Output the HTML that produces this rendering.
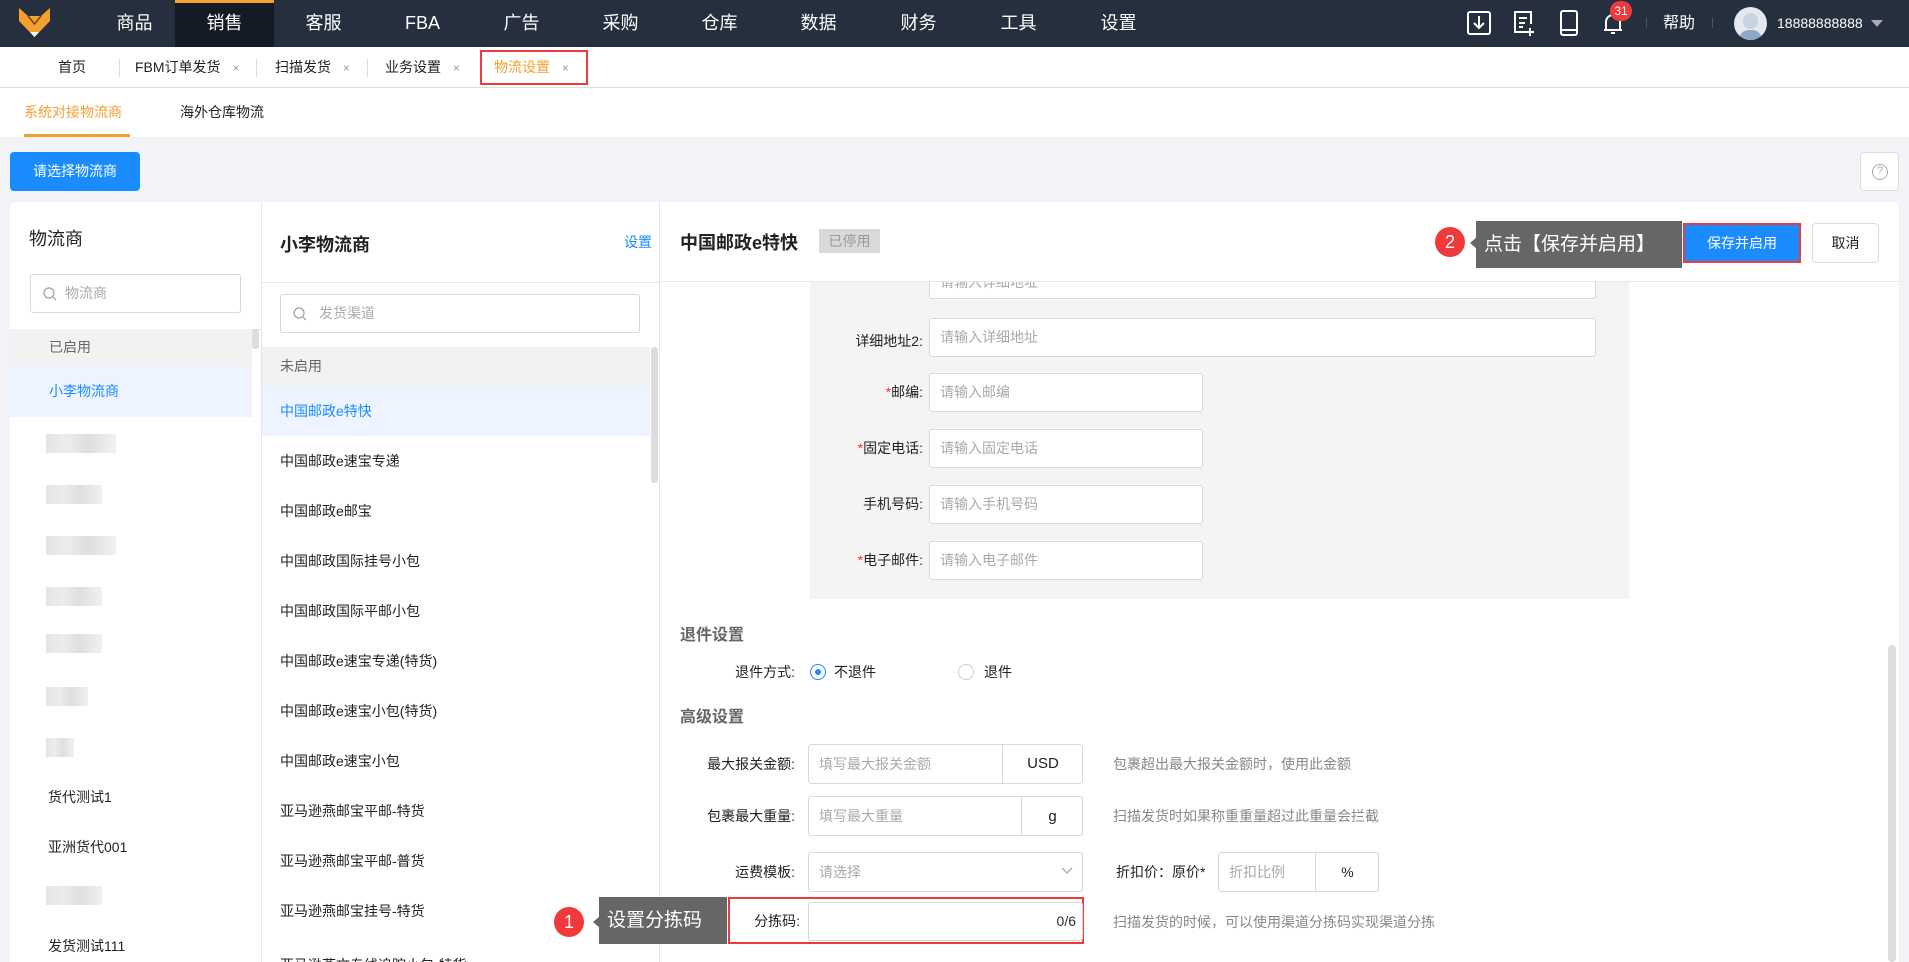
<!DOCTYPE html>
<html><head><meta charset="utf-8">
<style>
*{margin:0;padding:0;box-sizing:border-box}
body{width:1909px;height:962px;overflow:hidden;background:#f2f3f7;font-family:"Liberation Sans","Noto Sans CJK SC",sans-serif;font-size:14px;color:#222;position:relative}
.a{position:absolute}
.nav{left:0;top:0;width:1909px;height:47px;background:#252f3e}
.ni{top:0;height:47px;width:99px;line-height:47px;text-align:center;color:#fff;font-size:18px}
.tabs{left:0;top:47px;width:1909px;height:41px;background:#fff;border-bottom:1px solid #ddd}
.tb{top:0;height:41px;line-height:41px;font-size:14px;color:#222}
.x{color:#999;font-size:12px}
.sep{top:12px;width:1px;height:18px;background:#ddd}
.sub{left:0;top:88px;width:1909px;height:49px;background:#fff}
.inp{background:#fff;border:1px solid #d9d9d9;border-radius:3px;color:#aaa;font-size:14px;padding-left:10px}
.li{left:0;width:100%;height:50px;line-height:50px;font-size:14px}
.lbl{text-align:right;font-size:14px;color:#222}
.blur{height:19px;background:linear-gradient(90deg,#ddd,#e8e8e8 30%,#d6d6d6 60%,#eee);opacity:.8}
.hint{color:#888;font-size:14px}
</style></head><body>
<div class="a nav">
 <svg class="a" style="left:18px;top:7px" width="33" height="31" viewBox="0 0 33 31"><path d="M1 1 L10 9 H23 L32 1 V14 L16.5 30 L1 14Z" fill="#f6a030"/><path d="M10 9 L16.5 17 L23 9" fill="none" stroke="#6b4a1a" stroke-width="1.5"/><path d="M12 25 L16.5 30 L21 25Z" fill="#fff"/></svg>
 <div class="a ni" style="left:85px">商品</div>
 <div class="a ni" style="left:175px;background:#141a26;border-top:3px solid #f6a030;line-height:41px">销售</div>
 <div class="a ni" style="left:274px">客服</div>
 <div class="a ni" style="left:373px">FBA</div>
 <div class="a ni" style="left:472px">广告</div>
 <div class="a ni" style="left:571px">采购</div>
 <div class="a ni" style="left:670px">仓库</div>
 <div class="a ni" style="left:769px">数据</div>
 <div class="a ni" style="left:869px">财务</div>
 <div class="a ni" style="left:969px">工具</div>
 <div class="a ni" style="left:1069px">设置</div>
 <svg class="a" style="left:1467px;top:11px" width="24" height="24" viewBox="0 0 24 24" fill="none" stroke="#fff" stroke-width="2"><rect x="1" y="1" width="22" height="22" rx="2"/><path d="M12 5v12M7 12l5 5 5-5"/></svg>
 <svg class="a" style="left:1513px;top:11px" width="24" height="26" viewBox="0 0 24 26" fill="none" stroke="#fff" stroke-width="2"><path d="M15 21H2V1h16v12M6 7h8M6 12h6M6 16h4M17 17v8M13 21h8"/></svg>
 <svg class="a" style="left:1560px;top:10px" width="18" height="26" viewBox="0 0 18 26" fill="none" stroke="#fff" stroke-width="2"><rect x="1" y="1" width="16" height="24" rx="2"/><path d="M1 20h16"/></svg>
 <svg class="a" style="left:1602px;top:12px" width="22" height="24" viewBox="0 0 22 24" fill="none" stroke="#fff" stroke-width="2"><path d="M4 18V10a7 7 0 0 1 14 0v8H2h18M9 21h4"/></svg>
 <div class="a" style="left:1610px;top:1px;width:22px;height:20px;border-radius:10px;background:#f0393b;color:#fff;font-size:12px;text-align:center;line-height:20px">31</div>
 <div class="a" style="left:1646px;top:18px;width:1px;height:10px;background:#555"></div>
 <div class="a" style="left:1663px;top:0;line-height:47px;color:#fff;font-size:16px">帮助</div>
 <div class="a" style="left:1712px;top:18px;width:1px;height:10px;background:#555"></div>
 <div class="a" style="left:1734px;top:7px;width:33px;height:33px;border-radius:50%;background:#e5e8ee;overflow:hidden"><div class="a" style="left:9px;top:6px;width:15px;height:16px;border-radius:50%;background:#c8d2e0"></div><div class="a" style="left:5px;top:23px;width:23px;height:14px;border-radius:10px 10px 0 0;background:#8ea6c8"></div></div>
 <div class="a" style="left:1777px;top:0;line-height:47px;color:#fff;font-size:14px">18888888888</div>
 <div class="a" style="left:1871px;top:20px;width:0;height:0;border-left:6px solid transparent;border-right:6px solid transparent;border-top:7px solid #aaa"></div>
</div>

<div class="a tabs">
 <div class="a tb" style="left:58px">首页</div>
 <div class="a sep" style="left:119px"></div>
 <div class="a tb" style="left:135px">FBM订单发货 <span class="x" style="margin-left:8px">×</span></div>
 <div class="a sep" style="left:256px"></div>
 <div class="a tb" style="left:275px">扫描发货 <span class="x" style="margin-left:8px">×</span></div>
 <div class="a sep" style="left:367px"></div>
 <div class="a tb" style="left:385px">业务设置 <span class="x" style="margin-left:8px">×</span></div>
 <div class="a" style="left:480px;top:3px;width:108px;height:35px;border:2px solid #f0393b"></div>
 <div class="a tb" style="left:494px;color:#f6a030">物流设置 <span class="x" style="margin-left:8px">×</span></div>
</div>

<div class="a sub">
 <div class="a" style="left:24px;top:0;line-height:48px;color:#f6a030;font-size:14px">系统对接物流商</div>
 <div class="a" style="left:24px;top:46px;width:106px;height:3px;background:#f6a030"></div>
 <div class="a" style="left:180px;top:0;line-height:48px;font-size:14px">海外仓库物流</div>
</div>

<div class="a" style="left:10px;top:152px;width:130px;height:39px;background:#1a8cff;border-radius:4px;color:#fff;text-align:center;line-height:39px;font-size:14px">请选择物流商</div>
<div class="a" style="left:1860px;top:152px;width:39px;height:39px;background:#fff;border:1px solid #ddd;border-radius:4px"><div class="a" style="left:11px;top:11px;width:16px;height:16px;border:1.5px solid #aaa;border-radius:50%;color:#aaa;font-size:11px;text-align:center;line-height:13px">?</div></div>

<div class="a" style="left:10px;top:202px;width:1889px;height:760px;background:#fff;border-radius:6px 6px 0 0;overflow:hidden">
 <div class="a" style="left:0;top:0;width:252px;height:760px;border-right:1px solid #e5e5e5">
  <div class="a" style="left:19px;top:23px;font-size:18px">物流商</div>
  <div class="a inp" style="left:20px;top:72px;width:211px;height:39px;line-height:37px;padding-left:34px">物流商</div>
  <svg class="a" style="left:33px;top:85px" width="14" height="14" viewBox="0 0 14 14" fill="none" stroke="#aaa" stroke-width="1.4"><circle cx="6" cy="6" r="5"/><path d="M10 10l3 3"/></svg>
  <div class="a" style="left:0;top:127px;width:252px;height:1px;background:#e8e8e8"></div>
  <div class="a" style="left:0;top:127px;width:242px;height:37px;background:#f2f2f2;color:#666;line-height:37px;padding-left:39px">已启用</div>
  <div class="a" style="left:0;top:164px;width:242px;height:51px;background:#eef4ff;color:#1a8cff;line-height:51px;padding-left:39px">小李物流商</div>
  <div class="a" style="left:242px;top:127px;width:7px;height:20px;background:#ddd;border-radius:3px"></div>
  <div class="a blur" style="left:36px;top:232px;width:70px"></div>
  <div class="a blur" style="left:36px;top:283px;width:56px"></div>
  <div class="a blur" style="left:36px;top:334px;width:70px"></div>
  <div class="a blur" style="left:36px;top:385px;width:56px"></div>
  <div class="a blur" style="left:36px;top:432px;width:56px"></div>
  <div class="a blur" style="left:36px;top:485px;width:42px"></div>
  <div class="a blur" style="left:36px;top:536px;width:28px"></div>
  <div class="a" style="left:38px;top:570px;line-height:50px">货代测试1</div>
  <div class="a" style="left:38px;top:620px;line-height:50px">亚洲货代001</div>
  <div class="a blur" style="left:36px;top:684px;width:56px"></div>
  <div class="a" style="left:38px;top:719px;line-height:50px">发货测试111</div>
 </div>
 <div class="a" style="left:252px;top:0;width:398px;height:760px;border-right:1px solid #e5e5e5">
  <div class="a" style="left:18px;top:29px;font-size:18px;font-weight:bold">小李物流商</div>
  <div class="a" style="left:362px;top:30px;font-size:14px;color:#1a8cff">设置</div>
  <div class="a" style="left:0;top:80px;width:398px;height:1px;background:#e8e8e8"></div>
  <div class="a inp" style="left:18px;top:92px;width:360px;height:39px;line-height:37px;padding-left:38px">发货渠道</div>
  <svg class="a" style="left:31px;top:105px" width="14" height="14" viewBox="0 0 14 14" fill="none" stroke="#aaa" stroke-width="1.4"><circle cx="6" cy="6" r="5"/><path d="M10 10l3 3"/></svg>
  <div class="a" style="left:0;top:145px;width:388px;height:39px;background:#f2f2f2;color:#666;line-height:39px;padding-left:18px">未启用</div>
  <div class="a" style="left:0;top:184px;width:388px;height:50px;background:#eef4ff;color:#1a8cff;line-height:50px;padding-left:18px">中国邮政e特快</div>
  <div class="a" style="left:389px;top:145px;width:7px;height:136px;background:#ddd;border-radius:3px"></div>
  <div class="a" style="left:18px;top:234px;line-height:50px">中国邮政e速宝专递</div>
  <div class="a" style="left:18px;top:284px;line-height:50px">中国邮政e邮宝</div>
  <div class="a" style="left:18px;top:334px;line-height:50px">中国邮政国际挂号小包</div>
  <div class="a" style="left:18px;top:384px;line-height:50px">中国邮政国际平邮小包</div>
  <div class="a" style="left:18px;top:434px;line-height:50px">中国邮政e速宝专递(特货)</div>
  <div class="a" style="left:18px;top:484px;line-height:50px">中国邮政e速宝小包(特货)</div>
  <div class="a" style="left:18px;top:534px;line-height:50px">中国邮政e速宝小包</div>
  <div class="a" style="left:18px;top:584px;line-height:50px">亚马逊燕邮宝平邮-特货</div>
  <div class="a" style="left:18px;top:634px;line-height:50px">亚马逊燕邮宝平邮-普货</div>
  <div class="a" style="left:18px;top:684px;line-height:50px">亚马逊燕邮宝挂号-特货</div>
  <div class="a" style="left:18px;top:738px;line-height:50px">亚马逊燕文专线追踪小包-特货</div>
 </div>
 <div class="a" style="left:650px;top:0;width:1239px;height:760px">
  <div class="a" style="left:150px;top:80px;width:819px;height:317px;background:#f4f4f4"></div>
  <div class="a inp" style="left:269px;top:64px;width:667px;height:33px;line-height:31px;overflow:hidden">请输入详细地址</div>
  <div class="a lbl" style="left:140px;top:120px;width:123px;line-height:39px">详细地址2:</div>
  <div class="a inp" style="left:269px;top:116px;width:667px;height:39px;line-height:37px">请输入详细地址</div>
  <div class="a lbl" style="left:140px;top:171px;width:123px;line-height:39px"><span style="color:#f0393b">*</span>邮编:</div>
  <div class="a inp" style="left:269px;top:171px;width:274px;height:39px;line-height:37px">请输入邮编</div>
  <div class="a lbl" style="left:140px;top:227px;width:123px;line-height:39px"><span style="color:#f0393b">*</span>固定电话:</div>
  <div class="a inp" style="left:269px;top:227px;width:274px;height:39px;line-height:37px">请输入固定电话</div>
  <div class="a lbl" style="left:140px;top:283px;width:123px;line-height:39px">手机号码:</div>
  <div class="a inp" style="left:269px;top:283px;width:274px;height:39px;line-height:37px">请输入手机号码</div>
  <div class="a lbl" style="left:140px;top:339px;width:123px;line-height:39px"><span style="color:#f0393b">*</span>电子邮件:</div>
  <div class="a inp" style="left:269px;top:339px;width:274px;height:39px;line-height:37px">请输入电子邮件</div>

  <div class="a" style="left:0;top:0;width:1239px;height:80px;background:#fff;border-bottom:1px solid #e8e8e8"></div>
  <div class="a" style="left:20px;top:27px;font-size:18px;font-weight:bold">中国邮政e特快</div>
  <div class="a" style="left:159px;top:27px;width:61px;height:24px;background:#d9d9d9;color:#999;text-align:center;line-height:24px;font-size:14px">已停用</div>
  <div class="a" style="left:775px;top:25px;width:30px;height:30px;border-radius:50%;background:#f0393b;color:#fff;text-align:center;line-height:30px;font-size:18px">2</div>
  <div class="a" style="left:810px;top:35px;width:0;height:0;border-top:6px solid transparent;border-bottom:6px solid transparent;border-right:7px solid #666"></div>
  <div class="a" style="left:816px;top:19px;width:206px;height:47px;background:#666;color:#fff;font-size:19px;line-height:47px;padding-left:8px">点击【保存并启用】</div>
  <div class="a" style="left:1023px;top:21px;width:118px;height:40px;border:2px solid #f0393b;background:#1a8cff;color:#fff;text-align:center;line-height:36px;font-size:14px">保存并启用</div>
  <div class="a" style="left:1152px;top:21px;width:67px;height:40px;border:1px solid #ddd;border-radius:4px;text-align:center;line-height:38px;font-size:14px">取消</div>

  <div class="a" style="left:20px;top:419px;font-size:16px;font-weight:bold;color:#666">退件设置</div>
  <div class="a lbl" style="left:30px;top:458px;width:105px;line-height:24px">退件方式:</div>
  <div class="a" style="left:150px;top:462px;width:16px;height:16px;border:1px solid #1a8cff;border-radius:50%"><div class="a" style="left:4px;top:4px;width:6px;height:6px;border-radius:50%;background:#1a8cff"></div></div>
  <div class="a" style="left:174px;top:458px;line-height:24px">不退件</div>
  <div class="a" style="left:298px;top:462px;width:16px;height:16px;border:1px solid #ccc;border-radius:50%"></div>
  <div class="a" style="left:324px;top:458px;line-height:24px">退件</div>
  <div class="a" style="left:20px;top:501px;font-size:16px;font-weight:bold;color:#666">高级设置</div>

  <div class="a lbl" style="left:20px;top:542px;width:115px;line-height:40px">最大报关金额:</div>
  <div class="a inp" style="left:148px;top:542px;width:275px;height:40px;line-height:38px">填写最大报关金额</div>
  <div class="a" style="left:342px;top:542px;width:81px;height:40px;border-left:1px solid #d9d9d9;text-align:center;line-height:40px;font-size:15px">USD</div>
  <div class="a hint" style="left:453px;top:542px;line-height:40px">包裹超出最大报关金额时，使用此金额</div>

  <div class="a lbl" style="left:20px;top:594px;width:115px;line-height:40px">包裹最大重量:</div>
  <div class="a inp" style="left:148px;top:594px;width:275px;height:40px;line-height:38px">填写最大重量</div>
  <div class="a" style="left:361px;top:594px;width:62px;height:40px;border-left:1px solid #d9d9d9;text-align:center;line-height:42px;font-size:15px">g</div>
  <div class="a hint" style="left:453px;top:594px;line-height:40px">扫描发货时如果称重重量超过此重量会拦截</div>

  <div class="a lbl" style="left:20px;top:650px;width:115px;line-height:40px">运费模板:</div>
  <div class="a inp" style="left:148px;top:650px;width:275px;height:40px;line-height:38px">请选择</div>
  <svg class="a" style="left:401px;top:665px" width="12" height="8" viewBox="0 0 12 8" fill="none" stroke="#aaa" stroke-width="1.3"><path d="M1 1l5 5 5-5"/></svg>
  <div class="a" style="left:456px;top:650px;line-height:40px">折扣价：原价*</div>
  <div class="a inp" style="left:558px;top:650px;width:161px;height:40px;line-height:38px">折扣比例</div>
  <div class="a" style="left:655px;top:650px;width:64px;height:40px;border-left:1px solid #d9d9d9;text-align:center;line-height:40px">%</div>

  <div class="a" style="left:68px;top:695px;width:356px;height:47px;border:2px solid #f0393b"></div>
  <div class="a lbl" style="left:50px;top:700px;width:90px;line-height:38px">分拣码:</div>
  <div class="a inp" style="left:148px;top:700px;width:275px;height:39px;line-height:37px;text-align:right;padding-right:6px;color:#333">0/6</div>
  <div class="a hint" style="left:453px;top:700px;line-height:40px">扫描发货的时候，可以使用渠道分拣码实现渠道分拣</div>
  <div class="a" style="left:1228px;top:443px;width:8px;height:317px;background:#ddd;border-radius:4px"></div>
 </div>
 <div class="a" style="left:544px;top:705px;width:30px;height:30px;border-radius:50%;background:#f0393b;color:#fff;text-align:center;line-height:30px;font-size:18px">1</div>
 <div class="a" style="left:583px;top:714px;width:0;height:0;border-top:6px solid transparent;border-bottom:6px solid transparent;border-right:7px solid #666"></div>
 <div class="a" style="left:589px;top:695px;width:128px;height:47px;background:#666;color:#fff;font-size:19px;line-height:47px;padding-left:8px">设置分拣码</div>
</div>
</body></html>
